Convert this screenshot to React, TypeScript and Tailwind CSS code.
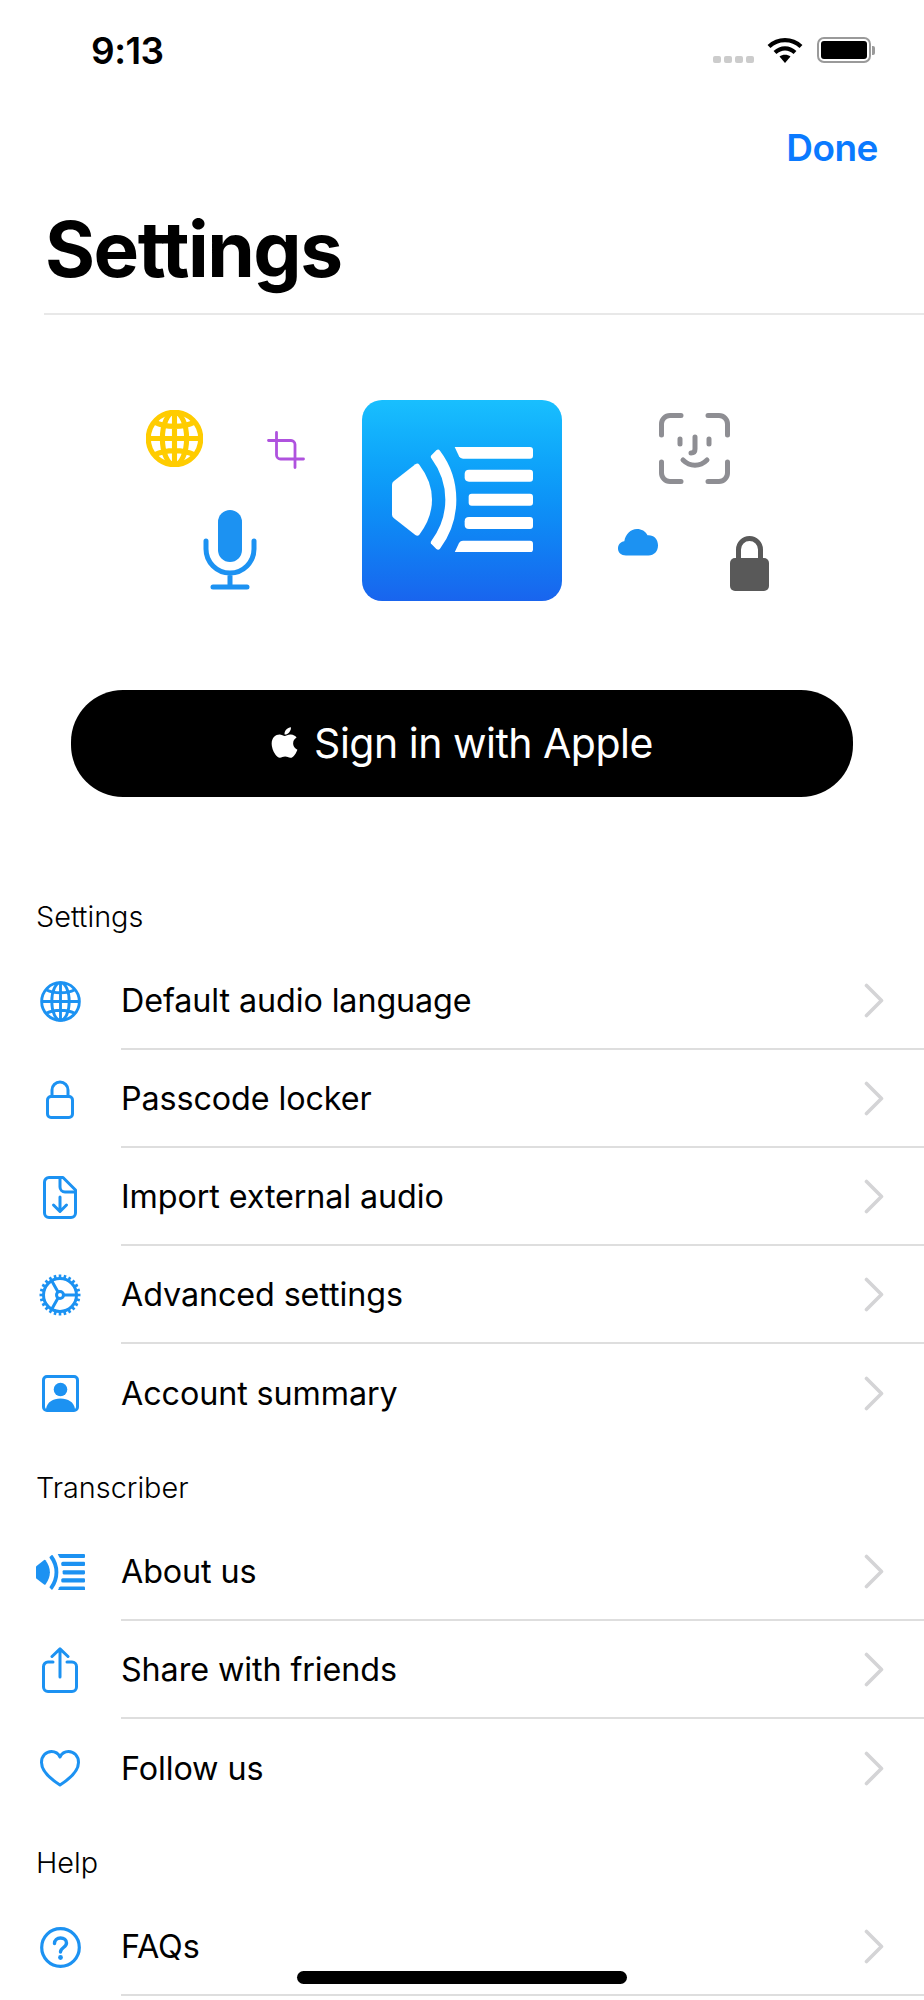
import React from 'react';
import { FaApple } from 'react-icons/fa';

const BLUE = '#1c92f2';

const Globe = ({ color, width, sw }: { color: string; width: number; sw: number }) => (
    <svg width={width} height={width} viewBox="0 0 40 40" fill="none" stroke={color} strokeWidth={sw}>
        <circle cx="20" cy="20" r="18.4" />
        <ellipse cx="20" cy="20" rx="8.5" ry="18.4" />
        <path d="M20 2v36M2 20h36M6 8.5c8 4 20 4 28 0M6 31.5c8-4 20-4 28 0" />
    </svg>
);

const LockOutline = () => (
    <svg width="28" height="39" viewBox="0 0 28 39" fill="none" stroke={BLUE} strokeWidth="3">
        <rect x="1.5" y="16.5" width="25" height="21" rx="3.5" />
        <path d="M6 16.5V10a8 8 0 0 1 16 0v6.5" />
    </svg>
);

const DocDown = () => (
    <svg width="34" height="43" viewBox="0 0 34 43" fill="none" stroke={BLUE} strokeWidth="3" strokeLinecap="round" strokeLinejoin="round">
        <path d="M20 1.5H6a4.5 4.5 0 0 0-4.5 4.5v31A4.5 4.5 0 0 0 6 41.5h22a4.5 4.5 0 0 0 4.5-4.5V14L20 1.5z" />
        <path d="M17 1.5V11a5 5 0 0 0 5 5h10" />
        <path d="M17 21v14M10.5 29l6.5 6.5 6.5-6.5" />
    </svg>
);

const Gear = () => (
    <svg width="44" height="44" viewBox="0 0 44 44" fill="none" stroke={BLUE} strokeWidth="3">
        <circle cx="22" cy="22" r="16.5" />
        <circle cx="22" cy="22" r="3.5" />
        <path d="M25.5 22H38M20 19l-7-12.5M20 25l-7 12.5" />
        {Array.from({ length: 24 }).map((_, i) => (
            <path key={i} d="M22 1.5v5" strokeWidth="2.6" transform={`rotate(${i * 15} 22 22)`} />
        ))}
    </svg>
);

const Person = () => (
    <svg width="37" height="37" viewBox="0 0 37 37" fill="none">
        <rect x="1.5" y="1.5" width="34" height="34" rx="3.5" stroke={BLUE} strokeWidth="3" />
        <circle cx="18.5" cy="14.5" r="6.8" fill={BLUE} />
        <path d="M4 34c1-7 7-10.500 14.500-10.500S32 27 33 34z" fill={BLUE} />
    </svg>
);

const AppGlyph = ({ width, color }: { width: number; color: string }) => (
    <svg width={width} height={(width * 316) / 423} viewBox="90 144 423 316" fill={color}>
        <path d="M90 257q0-6 5-10l65-51q7-5 12 1 38 50 38 105t-38 105q-5 6-12 1l-65-51q-5-4-5-10z" />
        <path d="M208 178q-4-6 1-10l14-14q6-5 11 1 49 65 49 147t-49 147q-5 6-11 1l-14-14q-5-4-1-10 42-57 42-124t-42-124z" />
        <path d="M278 144h226q9 0 9 9v17q0 9-9 9H303q-8 0-12-7z" />
        <path d="M308 225q0-13 13-13h183q9 0 9 9v18q0 9-9 9H321q-13 0-13-13z" />
        <path d="M320 293q0-9 9-9h175q9 0 9 9v18q0 9-9 9H329q-9 0-9-9z" />
        <path d="M308 367q0-13 13-13h183q9 0 9 9v18q0 9-9 9H321q-13 0-13-13z" />
        <path d="M278 460h226q9 0 9-9v-17q0-9-9-9H303q-8 0-12 7z" />
    </svg>
);

const Share = () => (
    <svg width="36" height="46" viewBox="0 0 36 46" fill="none" stroke={BLUE} strokeWidth="3" strokeLinecap="round" strokeLinejoin="round">
        <path d="M11 15H6a4.500 4.500 0 0 0-4.500 4.500V40A4.500 4.500 0 0 0 6 44.500h24a4.500 4.500 0 0 0 4.500-4.500V19.500A4.500 4.500 0 0 0 30 15h-5" />
        <path d="M18 30V2M10 9.500 18 1.800l8 7.700" />
    </svg>
);

const Heart = () => (
    <svg width="40" height="37" viewBox="0 0 40 37" fill="none" stroke={BLUE} strokeWidth="3" strokeLinejoin="round">
        <path d="M20 35C9 28 1.500 21 1.500 12.500 1.500 6 6 1.500 11.500 1.500c3.800 0 6.800 2 8.500 5.500 1.700-3.500 4.700-5.500 8.500-5.500C34 1.500 38.500 6 38.500 12.500 38.500 21 31 28 20 35z" />
    </svg>
);

const Question = () => (
    <svg width="41" height="41" viewBox="0 0 41 41" fill="none" stroke={BLUE}>
        <circle cx="20.500" cy="20.500" r="18.800" strokeWidth="3.200" />
        <path d="M14.500 16.500c0-3.500 2.500-5.500 6-5.500s6 2 6 5c0 4.500-6 4.500-6 9" strokeWidth="3.400" strokeLinecap="round" />
        <circle cx="20.500" cy="30.500" r="2.400" fill={BLUE} stroke="none" />
    </svg>
);

const Chevron = () => (
    <svg width="20" height="35" viewBox="0 0 20 35" fill="none" stroke="#d4d4d6" strokeWidth="3.600" strokeLinecap="round" strokeLinejoin="round">
        <path d="M2.500 2.500 17.500 17.500 2.500 32.500" />
    </svg>
);

const Row = ({ icon, label, last }: { icon: React.ReactNode; label: string; last?: boolean }) => (
    <div className="flex h-[98px] items-stretch">
        <div className="flex w-[121px] shrink-0 items-center justify-center pr-[1px]">{icon}</div>
        <div className={`flex flex-1 items-center justify-between pr-[40px] ${last ? '' : 'border-b-2 border-[#dedede]'}`}>
            <span className="mt-[2px] text-[32.300px] font-normal tracking-[-0.1px] text-black">{label}</span>
            <Chevron />
        </div>
    </div>
);

const SectionLabel = ({ text }: { text: string }) => (
    <div className="flex h-[81px] items-center pl-[36px] pt-[10px] text-[28.800px] font-light text-black">{text}</div>
);

export default function App() {
    return (
        <div className="relative h-[2000px] w-[924px] overflow-hidden bg-white font-['Inter','Liberation_Sans',sans-serif]">
            {/* Status bar */}
            <div className="flex h-[124px] items-start justify-between pl-[91px] pr-[49px] pt-[31px]">
                <span className="text-[37px] font-semibold leading-[40px] tracking-[-0.5px] text-black">9:13</span>
                <div className="flex items-center pt-[6px]">
                    <div className="mt-[19px] flex gap-[3px]">
                        <div className="h-[7px] w-[8px] rounded-[2px] bg-[#cccccc]" />
                        <div className="h-[7px] w-[8px] rounded-[2px] bg-[#cccccc]" />
                        <div className="h-[7px] w-[8px] rounded-[2px] bg-[#cccccc]" />
                        <div className="h-[7px] w-[8px] rounded-[2px] bg-[#cccccc]" />
                    </div>
                    <svg className="ml-[13px]" width="36" height="26" viewBox="0 0 36 26" fill="none" stroke="black" strokeWidth="4.200">
                        <path d="M2 9.500C11 1 25 1 34 9.500M8 15.500c6-5.500 14-5.500 20 0" />
                        <path d="M18 26l-5.500-6.500c3-2.500 8-2.500 11 0z" fill="black" stroke="none" />
                    </svg>
                    <div className="ml-[14px] flex items-center">
                        <div className="flex h-[26px] w-[54px] items-center justify-center rounded-[7px] border-2 border-[#9a9a9a]">
                            <div className="h-[18px] w-[46px] rounded-[3px] bg-black" />
                        </div>
                        <div className="ml-[1px] h-[9px] w-[3px] rounded-r-[2px] bg-[#9a9a9a]" />
                    </div>
                </div>
            </div>

            {/* Nav */}
            <div className="flex h-[48px] items-center justify-end pr-[46px]">
                <span className="text-[37px] font-semibold tracking-[-0.5px] text-[#0a7aff]">Done</span>
            </div>
            <div className="h-[141px] pl-[45px] pt-[37px]">
                <h1 className="text-[76.500px] font-bold leading-[80px] tracking-[-1.500px] text-black">Settings</h1>
            </div>
            <div className="ml-[44px] h-[2px] bg-[#e8e8e8]" />

            {/* Hero: scattered feature icons around the app icon */}
            <div className="relative h-[375px]">
                <div className="absolute left-[146px] top-[95px]">
                    <Globe color="#ffcc00" width={57} sw={3.600} />
                </div>
                <svg className="absolute left-[267px] top-[116px]" width="38" height="38" viewBox="0 0 38 38" fill="none" stroke="#af52de" strokeWidth="2.800" strokeLinecap="round">
                    <path d="M9.500 1.500V24a4 4 0 0 0 4 4H36.500M1.500 9.500H24a4 4 0 0 1 4 4V36.500" />
                </svg>
                <svg className="absolute left-[203px] top-[195px]" width="54" height="80" viewBox="0 0 54 80" fill="none" stroke={BLUE} strokeWidth="5" strokeLinecap="round">
                    <rect x="15" y="0" width="24" height="52" rx="12" fill={BLUE} stroke="none" />
                    <path d="M3 31v8a24 24 0 0 0 48 0v-8M27 63v14M10 77h34" />
                </svg>
                <div className="absolute left-[362px] top-[85px] flex h-[201px] w-[200px] items-center justify-center rounded-[20px] bg-linear-to-b from-[#19bffe] to-[#1964ee] pb-[2px]">
                    <AppGlyph width={141} color="white" />
                </div>
                <svg className="absolute left-[659px] top-[98px]" width="71" height="71" viewBox="0 0 71 71" fill="none" stroke="#8e8e93" strokeWidth="5" strokeLinecap="round" strokeLinejoin="round">
                    <path d="M2.500 22V11a8.500 8.500 0 0 1 8.500-8.500H22M49 2.500h11A8.500 8.500 0 0 1 68.500 11V22M2.500 49v11A8.500 8.500 0 0 0 11 68.500H22M68.500 49v11A8.500 8.500 0 0 1 60 68.500H49" />
                    <path d="M21 26v5M50 26v5M36 24v12c0 3-1.500 4-4 4M24 47c7 7 17 7 24 0" />
                </svg>
                <svg className="absolute left-[618px] top-[214px]" width="40" height="27" viewBox="0 0 40 27" fill={BLUE}>
                    <path d="M8 26.500C3 26.500 0 23.500 0 19.500c0-4 2.700-6.800 6.300-7.300C7.700 5 12.500 0 19 0c4.600 0 8.400 2.200 10.500 6.200 6-.6 10.500 3.600 10.500 10 0 6-4 10.300-9.500 10.300z" />
                </svg>
                <svg className="absolute left-[730px] top-[220px]" width="39" height="56" viewBox="0 0 39 56" fill="none">
                    <path d="M8.500 24V14.500a11 11 0 0 1 22 0V24" stroke="#595959" strokeWidth="5" />
                    <rect x="0" y="23" width="39" height="33" rx="5" fill="#595959" />
                </svg>
            </div>

            {/* Sign in */}
            <div className="mx-[71px] flex h-[107px] items-center justify-center gap-[12px] rounded-[52px] bg-black pr-[4px]">
                <FaApple className="mb-[3px] text-[35px] text-white" />
                <span className="text-[41px] font-normal tracking-[-0.5px] text-white">Sign in with Apple</span>
            </div>

            <div className="mt-[74px]">
                <SectionLabel text="Settings" />
                <Row icon={<Globe color={BLUE} width={41} sw={2.800} />} label="Default audio language" />
                <Row icon={<LockOutline />} label="Passcode locker" />
                <Row icon={<DocDown />} label="Import external audio" />
                <Row icon={<Gear />} label="Advanced settings" />
                <Row icon={<Person />} label="Account summary" last />
                <SectionLabel text="Transcriber" />
                <Row icon={<AppGlyph width={49} color={BLUE} />} label="About us" />
                <Row icon={<Share />} label="Share with friends" />
                <Row icon={<Heart />} label="Follow us" last />
                <SectionLabel text="Help" />
                <Row icon={<Question />} label="FAQs" />
            </div>

            {/* Home indicator */}
            <div className="absolute bottom-[16px] left-[297px] h-[13px] w-[330px] rounded-full bg-black" />
        </div>
    );
}
